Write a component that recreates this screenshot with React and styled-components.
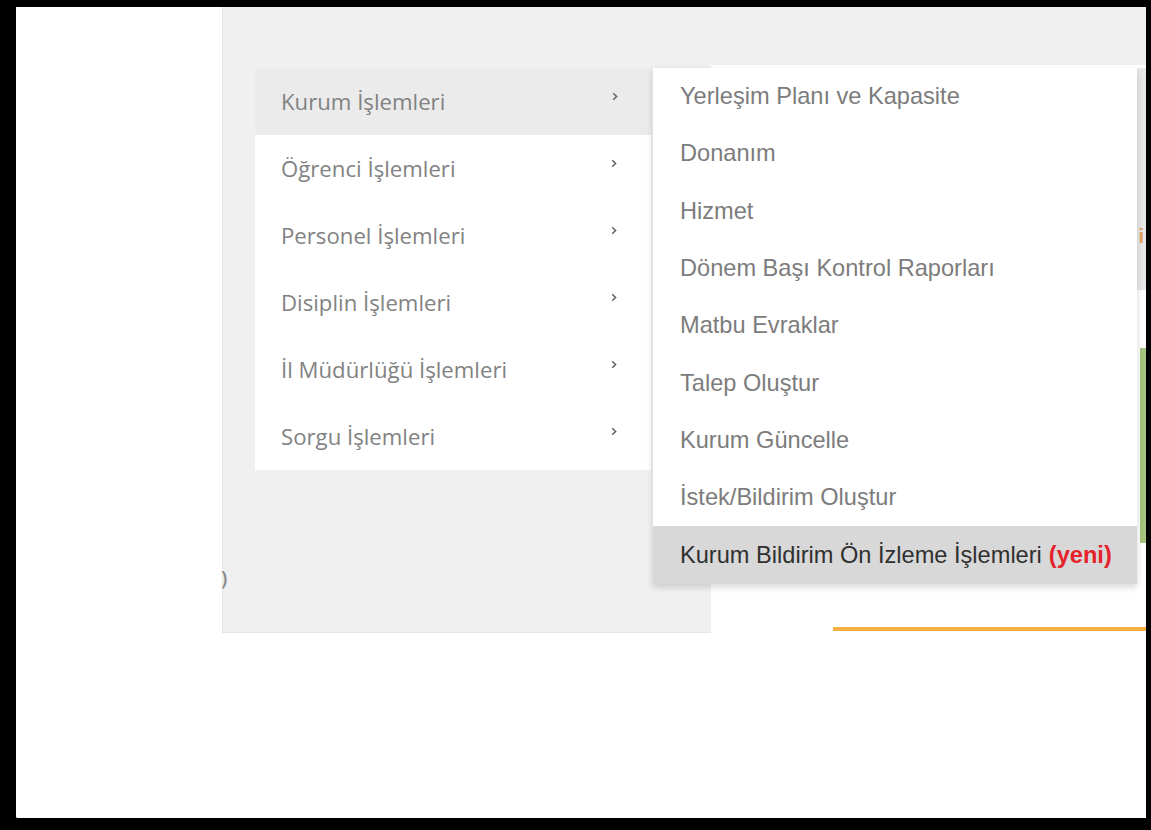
import React from "react";
import styled, { createGlobalStyle } from "styled-components";

const Global = createGlobalStyle`
  html, body {
    margin: 0;
    padding: 0;
    height: 830px;
    background: #000;
    overflow: hidden;
  }
  #root {
    height: 830px;
  }
`;

const Frame = styled.div`
  position: relative;
  margin: 7px 5px 0 16px;
  height: 811px;
  background: #fff;
  display: grid;
  grid-template-columns: 206px 1fr;
  overflow: hidden;
  border-bottom-left-radius: 2px;
`;

const Gutter = styled.div`
  background: #fff;
`;

const Stage = styled.div`
  display: flex;
  flex-direction: column;
`;

const TopBand = styled.div`
  height: 58px;
  background: #f0f0f0;
  box-shadow: inset 1px 0 #e7e7e7;
`;

const Lower = styled.div`
  display: flex;
  height: 567px;
`;

const SidePanel = styled.div`
  width: 489px;
  background: #f0f0f0;
  box-shadow: inset 1px 0 #e7e7e7, 0 1px 0 #e6e6e6;
  display: flex;
  flex-direction: column;
  justify-content: flex-end;
  padding-bottom: 44px;
  box-sizing: border-box;
`;

const Stray = styled.span`
  font-family: "Open Sans", sans-serif;
  font-size: 20px;
  font-weight: 600;
  color: #8a8a8a;
  line-height: 20px;
  margin-left: -1px;
`;

const Content = styled.div`
  flex: 1;
  display: flex;
  flex-direction: column;
  align-items: flex-end;
  padding-top: 3px;
  box-sizing: border-box;
`;

const InfoCard = styled.div`
  width: 160px;
  height: 222px;
  background: #e8e8e8;
  display: flex;
  align-items: flex-end;
  justify-content: flex-end;
  padding: 0 0 42px;
  box-sizing: border-box;
`;

const InfoMark = styled.span`
  font-family: "Liberation Sans", Arial, sans-serif;
  font-size: 20px;
  font-weight: 700;
  color: #e3a25a;
  margin-right: 2px;
`;

const StatusCard = styled.div`
  margin-top: 58px;
  width: 160px;
  height: 195px;
  background: #fff;
  border-right: 6px solid #a4c47f;
  box-sizing: border-box;
`;

const AccentRule = styled.div`
  margin-top: auto;
  margin-bottom: 1px;
  width: 313px;
  height: 4px;
  background: #f5b03e;
`;

const MenuLayer = styled.nav`
  position: absolute;
  left: 239px;
  top: 61px;
  display: flex;
  align-items: flex-start;
`;

const MainMenu = styled.ul`
  list-style: none;
  margin: 0;
  padding: 0;
  width: 396px;
  background: #fff;
`;

const MainItem = styled.li`
  height: 67px;
  display: flex;
  align-items: center;
  justify-content: space-between;
  padding: 0 34px 0 26px;
  box-sizing: border-box;
  background: ${(p) => (p.$active ? "#ebebeb" : "#fff")};
  margin-right: ${(p) => (p.$active ? "-1px" : "0")};
  font-family: "Open Sans", sans-serif;
  font-size: 22.2px;
  color: #828282;
`;

const Chevron = styled.svg`
  width: 6px;
  height: 9px;
  margin-bottom: 10px;
  flex: none;
`;

const SubMenu = styled.ul`
  list-style: none;
  margin: 0 0 0 2px;
  padding: 0;
  width: 484px;
  background: #fff;
  box-shadow: 0 3px 7px rgba(0, 0, 0, 0.16);
`;

const SubItem = styled.li`
  height: 57.3px;
  display: flex;
  align-items: center;
  padding-left: 27px;
  box-sizing: border-box;
  background: ${(p) => (p.$active ? "#d8d8d8" : "#fff")};
  font-family: "Liberation Sans", Arial, sans-serif;
  font-size: 23.6px;
  color: ${(p) => (p.$active ? "#303030" : "#7c7c7c")};
  white-space: nowrap;
`;

const NewTag = styled.b`
  color: #e5222b;
  margin-left: 7px;
`;

const mainItems = [
  "Kurum İşlemleri",
  "Öğrenci İşlemleri",
  "Personel İşlemleri",
  "Disiplin İşlemleri",
  "İl Müdürlüğü İşlemleri",
  "Sorgu İşlemleri",
];

const subItems = [
  "Yerleşim Planı ve Kapasite",
  "Donanım",
  "Hizmet",
  "Dönem Başı Kontrol Raporları",
  "Matbu Evraklar",
  "Talep Oluştur",
  "Kurum Güncelle",
  "İstek/Bildirim Oluştur",
];

const Arrow = () => (
  <Chevron viewBox="0 0 6 9">
    <path d="M1.2 1.2 L4.6 4.5 L1.2 7.8" fill="none" stroke="#666" strokeWidth="1.6" />
  </Chevron>
);

export default function App() {
  return (
    <>
      <Global />
      <Frame>
        <Gutter />
        <Stage>
          <TopBand />
          <Lower>
            <SidePanel>
              <Stray>)</Stray>
            </SidePanel>
            <Content>
              <InfoCard>
                <InfoMark>i</InfoMark>
              </InfoCard>
              <StatusCard />
              <AccentRule />
            </Content>
          </Lower>
        </Stage>

        <MenuLayer>
          <MainMenu>
            {mainItems.map((label, i) => (
              <MainItem key={label} $active={i === 0}>
                <span>{label}</span>
                <Arrow />
              </MainItem>
            ))}
          </MainMenu>
          <SubMenu>
            {subItems.map((label) => (
              <SubItem key={label}>{label}</SubItem>
            ))}
            <SubItem $active>
              Kurum Bildirim Ön İzleme İşlemleri<NewTag>(yeni)</NewTag>
            </SubItem>
          </SubMenu>
        </MenuLayer>
      </Frame>
    </>
  );
}
